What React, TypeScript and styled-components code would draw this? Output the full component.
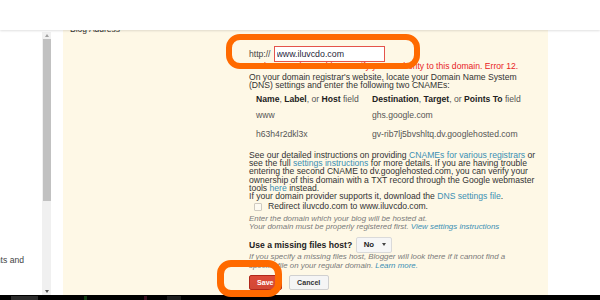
import styled, { createGlobalStyle } from "styled-components";

const GlobalStyle = createGlobalStyle`
	html, body {
		margin: 0;
		padding: 0;
		background: #fff;
	}
	body {
		font-family: "Liberation Sans", Arial, sans-serif;
	}
`;

const Screen = styled.div`
	position: relative;
	width: 600px;
	height: 300px;
	display: flex;
	flex-direction: column;
	overflow: hidden;
	background: #fff;
`;

const TopBar = styled.div`
	position: relative;
	z-index: 2;
	height: 30px;
	flex-shrink: 0;
	background: #fff;
	box-shadow: 0 1px 2px rgba(0, 0, 0, 0.12);
`;

const Main = styled.div`
	flex: 1;
	min-height: 0;
	display: flex;
`;

const SidePanel = styled.div`
	width: 42px;
	display: flex;
	flex-direction: column;
	justify-content: flex-end;
	padding-bottom: 31px;
	overflow: hidden;
	font-size: 8.6px;
	line-height: 8.3px;
	color: #444;
	white-space: nowrap;
	span {
		margin-left: -9px;
	}
`;

const Scrollbar = styled.div`
	width: 9px;
	margin-top: 2px;
	display: flex;
	flex-direction: column;
	align-items: center;
	background: #f0f0f0;
`;

const Arrow = styled.div<{ $down?: boolean }>`
	height: 7px;
	display: flex;
	align-items: center;
	justify-content: center;
	&::before {
		content: "";
		border-left: 2.5px solid transparent;
		border-right: 2.5px solid transparent;
		${p => (p.$down ? "border-top: 3px solid #505050;" : "border-bottom: 3px solid #a0a0a0;")}
	}
`;

const Thumb = styled.div`
	width: 8px;
	height: 162px;
	background: #c1c1c1;
`;

const Track = styled.div`
	flex: 1;
`;

const Gutter = styled.div`
	width: 12px;
`;

const Content = styled.div`
	width: 485px;
	display: grid;
	grid-template-columns: 186px 1fr;
	background: #fef8e6;
	color: #333;
	font-size: 8.6px;
	line-height: 8.3px;
	white-space: nowrap;
`;

const FieldLabel = styled.div`
	padding-left: 7px;
	margin-top: -5px;
	font-size: 8.5px;
`;

const Form = styled.div`
	padding-top: 16px;
	display: flex;
	flex-direction: column;
	align-items: flex-start;
`;

const UrlRow = styled.div`
	display: flex;
	align-items: center;
	gap: 3px;
	height: 16px;
	color: #444;
`;

const UrlInput = styled.input`
	box-sizing: border-box;
	width: 111px;
	height: 16px;
	margin: 0;
	padding: 0 2px;
	border: 1px solid #e4544c;
	background: #fff;
	color: #1f1f3a;
	font-family: "Liberation Sans", Arial, sans-serif;
	font-size: 8.8px;
	outline: none;
`;

const ErrorMsg = styled.div`
	color: #e8231e;
`;

const Instructions = styled.div`
	margin-top: 2.5px;
`;

const CnameRow = styled.div<{ $gap: number }>`
	display: grid;
	grid-template-columns: 116px auto;
	margin-left: 7px;
	margin-top: ${p => p.$gap}px;
	color: #555;
	b {
		color: #222;
	}
`;

const Note = styled.div`
	margin-top: 12.4px;
`;

const Link = styled.a`
	color: #3a8fb3;
	text-decoration: none;
`;

const CheckRow = styled.label`
	display: flex;
	align-items: center;
	gap: 6px;
	margin-top: 2px;
	padding-left: 5px;
	color: #333;
`;

const CheckBox = styled.span`
	box-sizing: border-box;
	width: 8px;
	height: 8px;
	border: 1px solid #cfcac0;
	border-radius: 1px;
	background: #fdfaf1;
`;

const Hint = styled.div<{ $gap: number }>`
	margin-top: ${p => p.$gap}px;
	font-style: italic;
	font-size: 7.9px;
	line-height: 8.4px;
	color: #7a7a7a;
`;

const HostRow = styled.div`
	display: flex;
	align-items: center;
	gap: 3.5px;
	height: 16px;
	margin-top: 5px;
`;

const HostLabel = styled.span`
	font-weight: bold;
	color: #222;
`;

const SelectButton = styled.div`
	box-sizing: border-box;
	width: 36px;
	height: 16px;
	display: flex;
	align-items: center;
	gap: 8px;
	padding-left: 7px;
	border: 1px solid #dadada;
	border-radius: 2px;
	background: #f6f6f6;
	font-weight: bold;
	font-size: 7.8px;
	color: #222;
	&::after {
		content: "";
		border-left: 2.5px solid transparent;
		border-right: 2.5px solid transparent;
		border-top: 3px solid #444;
	}
`;

const Actions = styled.div`
	display: flex;
	gap: 7px;
	margin-top: 5px;
`;

const Button = styled.div<{ $primary?: boolean }>`
	box-sizing: border-box;
	height: 15px;
	padding: 0 ${p => (p.$primary ? "7px" : "7.5px")};
	display: flex;
	align-items: center;
	border-radius: 2px;
	font-weight: bold;
	font-size: 7.1px;
	border: 1px solid ${p => (p.$primary ? "#b0281a" : "#d0d0d0")};
	background: ${p => (p.$primary ? "linear-gradient(#dd4b39, #d14836)" : "#f5f5f5")};
	color: ${p => (p.$primary ? "#fff" : "#333")};
`;

const Fill = styled.div`
	flex: 1;
	background: #fff;
`;

const Taskbar = styled.div`
	height: 5px;
	flex-shrink: 0;
	display: flex;
	align-items: flex-end;
	padding-left: 11px;
	background: #000;
`;

const TaskItem = styled.span<{ $w: number; $gap: number; $color: string }>`
	width: ${p => p.$w}px;
	height: 4px;
	margin-right: ${p => p.$gap}px;
	background: ${p => p.$color};
`;

// orange annotation rings drawn over the screenshot
const Ring = styled.div<{ $x: number; $y: number; $w: number; $h: number; $stroke: number }>`
	position: absolute;
	z-index: 3;
	left: ${p => p.$x}px;
	top: ${p => p.$y}px;
	width: ${p => p.$w}px;
	height: ${p => p.$h}px;
	box-sizing: border-box;
	border: ${p => p.$stroke}px solid #ff6a00;
	border-radius: 14px;
	pointer-events: none;
`;

function App() {
	return (
		<>
			<GlobalStyle />
			<Screen>
				<TopBar />
				<Main>
					<SidePanel>
						<span>ents and</span>
					</SidePanel>
					<Scrollbar>
						<Arrow />
						<Thumb />
						<Track />
						<Arrow $down />
					</Scrollbar>
					<Gutter />
					<Content>
						<FieldLabel>Blog Address</FieldLabel>
						<Form>
							<UrlRow>
								<span>http://</span>
								<UrlInput readOnly value="www.iluvcdo.com" />
							</UrlRow>
							<ErrorMsg>We have not been able to verify your authority to this domain. Error 12.</ErrorMsg>
							<Instructions>
								On your domain registrar's website, locate your Domain Name System
								<br />
								(DNS) settings and enter the following two CNAMEs:
							</Instructions>
							<CnameRow $gap={5.7}>
								<span>
									<b>Name</b>, <b>Label</b>, or <b>Host</b> field
								</span>
								<span>
									<b>Destination</b>, <b>Target</b>, or <b>Points To</b> field
								</span>
							</CnameRow>
							<CnameRow $gap={8}>
								<span>www</span>
								<span>ghs.google.com</span>
							</CnameRow>
							<CnameRow $gap={10.3}>
								<span>h63h4r2dkl3x</span>
								<span>gv-rib7lj5bvshltq.dv.googlehosted.com</span>
							</CnameRow>
							<Note>
								See our detailed instructions on providing <Link>CNAMEs for various registrars</Link> or
								<br />
								see the full <Link>settings instructions</Link> for more details. If you are having trouble
								<br />
								entering the second CNAME to dv.googlehosted.com, you can verify your
								<br />
								ownership of this domain with a TXT record through the Google webmaster
								<br />
								tools <Link>here</Link> instead.
								<br />
								If your domain provider supports it, download the <Link>DNS settings file</Link>.
							</Note>
							<CheckRow>
								<CheckBox />
								Redirect iluvcdo.com to www.iluvcdo.com.
							</CheckRow>
							<Hint $gap={4.3}>
								Enter the domain which your blog will be hosted at.
								<br />
								Your domain must be properly registered first. <Link>View settings instructions</Link>
							</Hint>
							<HostRow>
								<HostLabel>Use a missing files host?</HostLabel>
								<SelectButton>No</SelectButton>
							</HostRow>
							<Hint $gap={0.5}>
								If you specify a missing files host, Blogger will look there if it cannot find a
								<br />
								specific file on your regular domain. <Link>Learn more.</Link>
							</Hint>
							<Actions>
								<Button $primary>Save</Button>
								<Button>Cancel</Button>
							</Actions>
						</Form>
					</Content>
					<Fill />
				</Main>
				<Taskbar>
					<TaskItem $w={27} $gap={46} $color="#2b2b2b" />
					<TaskItem $w={3} $gap={57} $color="#103a10" />
					<TaskItem $w={3} $gap={20} $color="#3a1020" />
					<TaskItem $w={14} $gap={0} $color="#1e1e1e" />
				</Taskbar>
				<Ring $x={226} $y={34} $w={194} $h={35} $stroke={6.5} />
				<Ring $x={217} $y={260} $w={65} $h={37} $stroke={7} />
			</Screen>
		</>
	);
}

export default App;
